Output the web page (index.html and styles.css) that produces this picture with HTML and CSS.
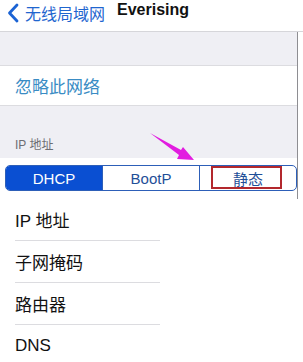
FILE: index.html
```html
<!DOCTYPE html>
<html lang="zh">
<head>
  <meta charset="UTF-8">
  <title>Everising</title>
  <link rel="stylesheet" href="styles.css">
</head>
<body>

  <div class="nav">
    <span class="back">
      <svg class="chevron" width="12" height="20" viewBox="0 0 12 20">
        <path d="M10 2 L2.5 10 L10 18" fill="none" stroke="#1b63d4" stroke-width="2.8" stroke-linecap="round" stroke-linejoin="round"/>
      </svg>
      无线局域网
    </span>
    <span class="title">Everising</span>
  </div>

  <div class="settings">
    <div class="gap"></div>
    <div class="row forget">忽略此网络</div>
    <div class="header">IP 地址</div>
    <div class="segwrap">
      <div class="segment">
        <div class="seg on">DHCP</div>
        <div class="seg">BootP</div>
        <div class="seg">静态<span class="mark"></span></div>
      </div>
    </div>
    <svg class="arrow" width="60" height="40" viewBox="0 0 60 40">
      <path d="M1 1 L32 18 L34 15 L45 28 L28 27 L30 23 Z" fill="#e21ce0"/>
    </svg>
  </div>

  <div class="list">
    <div class="item">IP 地址</div>
    <div class="item">子网掩码</div>
    <div class="item">路由器</div>
    <div class="item last">DNS</div>
  </div>

</body>
</html>
```

FILE: styles.css
```css
body {
  margin: 0;
  background-color: #fff;
  font-family: 'Liberation Sans', 'Noto Sans CJK SC', sans-serif;
  color: #111;
  width: 303px;
  height: 362px;
  overflow: hidden;
}
.nav {
  height: 32px;
  box-sizing: border-box;
  display: flex;
  align-items: flex-start;
  padding: 1px 0 0 7px;
  background-color: #fff;
  border-bottom: 1px solid #d6d6da;
}
.back {
  display: flex;
  align-items: center;
  gap: 6px;
  color: #1f66cf;
  font-size: 16px;
}
.title {
  margin-left: 12px;
  font-size: 16px;
  font-weight: bold;
}
.settings {
  position: relative;
  width: 297px;
  border-right: 1px solid #8e8e92;
  background-color: #efeff4;
}
.gap {
  height: 33px;
  border-bottom: 1px solid #dcdce0;
}
.row {
  height: 39px;
  display: flex;
  align-items: center;
  padding-left: 15px;
  background-color: #fff;
  border-bottom: 1px solid #dcdce0;
}
.forget {
  color: #3a8cc4;
  font-size: 17px;
}
.header {
  height: 52px;
  padding: 0 0 6px 15px;
  display: flex;
  align-items: flex-end;
  color: #6d6d72;
  font-size: 12px;
  box-sizing: border-box;
}
.segwrap {
  background-color: #fff;
  padding: 7px 0 8px 5px;
}
.segment {
  display: flex;
  height: 24px;
  width: 290px;
  border: 1px solid #2d5fb8;
  border-radius: 5px;
  overflow: hidden;
}
.seg {
  position: relative;
  flex: 1;
  display: flex;
  align-items: center;
  justify-content: center;
  color: #1f4f98;
  font-size: 15px;
  border-left: 1px solid #2d5fb8;
}
.seg.on {
  flex: 0 0 96px;
  border-left: none;
  background-color: #0a4fd2;
  color: #fff;
}
.mark {
  position: absolute;
  left: 11px;
  right: 14px;
  top: 0;
  bottom: 1px;
  border: 2px solid #b3282d;
}
.arrow {
  position: absolute;
  left: 149px;
  top: 100px;
}
.list {
  padding-left: 15px;
}
.item {
  width: 145px;
  height: 41px;
  display: flex;
  align-items: center;
  font-size: 17px;
  border-bottom: 1px solid #dcdce0;
}
.item.last {
  border-bottom: none;
}
```
